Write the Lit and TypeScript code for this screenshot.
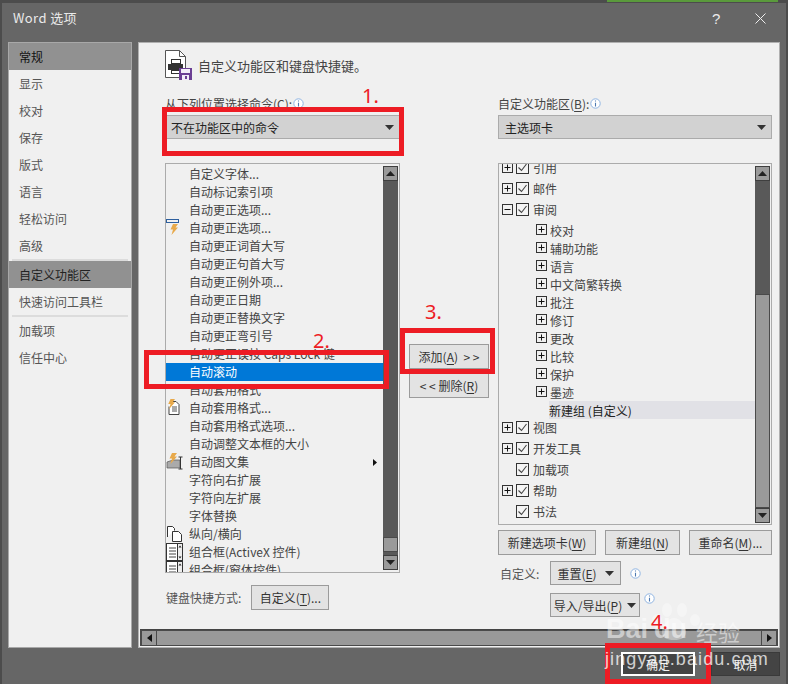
import { LitElement, html, css, svg } from "lit";
import { customElement } from "lit/decorators.js";

const plus = (minus = false) => html`<svg class="pm" width="11" height="11" viewBox="0 0 11 11"><rect x=".5" y=".5" width="10" height="10" fill="#f0f0f0" stroke="#333"/><path d="M2.5 5.5h6${minus ? "" : "M5.5 2.5v6"}" stroke="#111" fill="none"/></svg>`;
const check = () => html`<svg class="ck" width="13" height="13" viewBox="0 0 13 13"><rect x=".5" y=".5" width="12" height="12" fill="#f4f4f4" stroke="#333"/><path d="M2.5 6.5l3 3 5-6.5" stroke="#444" stroke-width="1.1" fill="none"/></svg>`;
const info = () => html`<svg class="info" width="11" height="11" viewBox="0 0 11 11"><circle cx="5.5" cy="5.5" r="4.7" fill="#fff" stroke="#8fb4e2"/><path d="M5.5 2.4v1.2M5.5 4.8v3.6" stroke="#4d79b0" stroke-width="1.1"/></svg>`;
const caret = () => html`<svg class="caret" width="9" height="5" viewBox="0 0 9 5"><path d="M0 0h9L4.5 5z" fill="#333"/></svg>`;

const bolt = svg`<path d="M5 0h5L7.5 3.5H10L3.5 11 5 5.5H2.5z" fill="#e8a94a"/>`;
const icons: Record<string, unknown> = {
  bolt: html`<svg width="14" height="18" viewBox="0 0 14 18"><rect x=".5" y=".5" width="12" height="3" fill="none" stroke="#2d5f9e"/><g transform="translate(2 5)">${bolt}</g></svg>`,
  doc: html`<svg width="14" height="18" viewBox="0 0 14 18"><path d="M5 2.5h5l3 3v10H3v-8" fill="#fff" stroke="#444"/><path d="M6 8h5M6 10h5M6 12h5" stroke="#555"/><g transform="scale(.9)">${bolt}</g></svg>`,
  auto: html`<svg width="18" height="18" viewBox="0 0 18 18"><path d="M1 15V9l6-2h7v8z" fill="#aaa" stroke="#555" stroke-width=".7"/><path d="M12.5 4h4M12.5 16h4M14.5 4v12" stroke="#333" fill="none"/><g transform="translate(1 0)">${bolt}</g></svg>`,
  page: html`<svg width="18" height="18" viewBox="0 0 18 18"><path d="M1.5 12V1.5h5l2 2v2" fill="#fff" stroke="#333"/><path d="M6.500 6.500h6l3 3v7h-9z" fill="#fff" stroke="#333"/></svg>`,
  combo: html`<svg width="18" height="18" viewBox="0 0 18 18"><rect x=".5" y=".5" width="16" height="17" fill="#fff" stroke="#333"/><rect x="11.500" y=".5" width="5" height="17" fill="#eee" stroke="#333"/><path d="M3 5h7M3 8h7M3 11h7M3 14h7" stroke="#444"/><path d="M12.500 4.500h3l-1.500-2zM12.500 13.500h3l-1.500 2z" fill="#222"/></svg>`,
};

const commands: [string, string?][] = [
  ["自定义字体..."],
  ["自动标记索引项"],
  ["自动更正选项..."],
  ["自动更正选项...", "bolt"],
  ["自动更正词首大写"],
  ["自动更正句首大写"],
  ["自动更正例外项..."],
  ["自动更正日期"],
  ["自动更正替换文字"],
  ["自动更正弯引号"],
  ["自动更正误按 Caps Lock 键"],
  ["自动滚动"],
  ["自动套用格式"],
  ["自动套用格式...", "doc"],
  ["自动套用格式选项..."],
  ["自动调整文本框的大小"],
  ["自动图文集", "auto"],
  ["字符向右扩展"],
  ["字符向左扩展"],
  ["字体替换"],
  ["纵向/横向", "page"],
  ["组合框(ActiveX 控件)", "combo"],
  ["组合框(窗体控件)", "combo"],
];

@customElement("app-root")
export class AppRoot extends LitElement {
  static styles = css`
    :host { display: block; width: 788px; height: 684px; overflow: hidden; position: relative;
      font-family: "Noto Sans CJK SC", "Noto Sans", sans-serif; font-size: 12px; color: #444; background: #4c4c4c; }
    * { box-sizing: border-box; }
    svg { display: block; flex: none; }
    u { text-underline-offset: 2px; }
    .topstrip { height: 3px; position: relative; background: #4c4c4c; }
    .green { position: absolute; left: 607px; right: 10px; top: 0; height: 2px; background: #5a9a3c; }
    .dialog { margin: 0 2px; height: 681px; background: #666; display: flex; flex-direction: column; }
    .title { height: 39px; display: flex; align-items: center; padding: 0 14px 0 11px; color: #eaeaea; font-size: 13px; letter-spacing: .4px; }
    .title .t { flex: 1; margin-top: -10px; }
    .title .q { width: 43px; font-size: 15px; margin-top: -9px; font-family: "Liberation Sans", sans-serif; text-align: left; }
    .title svg { margin-top: -9px; margin-right: 6px; }
    .main { display: flex; gap: 6px; padding: 0 6px; height: 606px; }
    .side { width: 124px; background: #f0f0f0; border: 1px solid #a8a8a8; display: flex; flex-direction: column; }
    .nav { height: 27px; padding-left: 10px; display: flex; align-items: center; color: #555; flex: none; }
    .nav.sel0 { background: #919191; color: #111; }
    .nav.sel1 { background: #919191; color: #222; margin-top: 0; }
    .nav.line { height: 27px; }
    .rule { height: 2px; background: #dcdcdc; margin: 0 3px; flex: none; }
    .rule.a { margin-top: 1px; }
    .content { flex: 1; background: #f0f0f0; border: 1px solid #b0b0b0; display: flex; flex-direction: column; }
    .body { flex: 1; padding: 8px 7px 0 26px; display: flex; flex-direction: column; }
    .head { display: flex; align-items: center; gap: 6px; height: 28px; font-size: 13px; color: #444; }
    .cols { display: flex; margin-top: 15px; }
    .left { width: 235px; }
    .mid { width: 98px; padding: 250px 9px 0; display: flex; flex-direction: column; gap: 4px; }
    .right { width: 274px; }
    .lab { height: 21px; display: flex; align-items: center; gap: 1px; padding-bottom: 3px; }
    .select { height: 24px; background: #d2d2d2; border: 1px solid #ababab; display: flex; align-items: center; justify-content: space-between; padding: 0 5px 0 6px; color: #222; margin-bottom: 24px; }
    .left .select { margin-left: 1px; padding-left: 4px; }
    .list { border: 1px solid #ababab; background: #f0f0f0; display: flex; position: relative; overflow: hidden; }
    .left .list { height: 410px; }
    .right .list { height: 362px; }
    .rows { flex: 1; overflow: hidden; min-width: 0; }
    .cmd { height: 18px; padding: 0 0 2px 23px; display: flex; align-items: center; white-space: nowrap; position: relative; }
    .cmds { padding-top: 1px; }
    .cmd .ic { position: absolute; left: 0; top: 0; }
    .cmd.on { background: #0078d7; color: #fff; }
    .cmd .more { position: absolute; right: 6px; top: 6px; }
    .sb { width: 15px; margin: 2px 1px 2px 0; background: #595959; display: flex; flex-direction: column; }
    .sb .btn { height: 15px; background: #9a9a9a; border: 1px solid #3f3f3f; display: flex; align-items: center; justify-content: center; flex: none; }
    .sb .thumb { background: #9a9a9a; border: 1px solid #4a4a4a; }
    .sb .gap { flex: 1; }
    .tree { margin-top: -7px; }
    .top { height: 21px; display: flex; align-items: center; padding-left: 3px; white-space: nowrap; }
    .top .pm { margin-right: 3px; }
    .top .ck { margin-right: 4px; }
    .top .sp { width: 14px; flex: none; }
    .top.before { margin-bottom: 1px; }
    .sub { height: 18px; display: flex; align-items: center; padding-left: 37px; }
    .sub .pm { margin: -2px 3px 0 0; }
    .leaf { height: 18px; margin-left: 50px; background: #e1e1e6; color: #222; display: flex; align-items: center; }
    .tree .after { margin-top: -2px; }
    .btn2 { height: 25px; background: #e3e3e3; border: 1px solid #9b9b9b; display: flex; align-items: center; justify-content: center; gap: 8px; color: #333; white-space: pre; flex: none; }
    .kb { display: flex; align-items: center; gap: 10px; margin-top: 12px; padding-left: 1px; color: #555; }
    .kb .btn2 { width: 78px; }
    .trio { display: flex; gap: 9px; margin-top: 5px; }
    .line2 { display: flex; gap: 9px; align-items: center; margin-top: 6px; }
    .cust { width: 43px; padding-left: 2px; color: #555; }
    .rowx { margin-left: 52px; display: flex; gap: 4px; margin-top: 8px; }
    .hbar { height: 17px; background: #4a4a4a; margin: 0 1px 1px; padding: 1px 2px; display: flex; gap: 1px; border-top: 1px solid #444; }
    .hbar .end { width: 14px; background: #9a9a9a; display: flex; align-items: center; justify-content: center; flex: none; }
    .hbar .mid2 { flex: 1; background: #999; }
    .foot { display: flex; justify-content: flex-end; gap: 16px; padding: 4px 6px 0; }
    .ok, .cancel { height: 24px; display: flex; align-items: center; justify-content: center; color: #f2f2f2; background: #444; }
    .ok { width: 74px; border: 2px solid #fff; }
    .cancel { width: 69px; border: 1px solid #3a3a3a; }
    .red { position: absolute; border: 5px solid #ed1c24; }
    .num { position: absolute; color: #ed1c24; font-size: 20px; line-height: 24px; font-family: "Noto Sans", sans-serif; }
    .wm { position: absolute; left: 604px; top: 600px; width: 170px; height: 72px; pointer-events: none; color: #fff; }
    .wm .a { position: absolute; top: 15px; font: 700 27px/28px "Liberation Sans", sans-serif; opacity: .5; }
    .wm .b { position: absolute; left: 92px; top: 18px; font-size: 22px; line-height: 26px; opacity: .5; }
    .wm .c { position: absolute; left: 1px; top: 49px; font: 400 18px/20px "Liberation Sans", sans-serif; letter-spacing: 1.1px; opacity: .75; white-space: nowrap; }
    .wm svg { position: absolute; left: 46px; top: 0; }
  `;

  private nav(t: string, cls = "") {
    return html`<div class="nav ${cls}">${t}</div>`;
  }

  private sb(thumbTop: number, thumbH: number) {
    return html`<div class="sb">
      <div class="btn"><svg width="9" height="5" viewBox="0 0 9 5"><path d="M4.500 0L9 5H0z" fill="#222"/></svg></div>
      <div style="height:${thumbTop}px;flex:none"></div>
      <div class="thumb" style="height:${thumbH}px;flex:none"></div>
      <div class="gap"></div>
      <div class="btn"><svg width="9" height="5" viewBox="0 0 9 5"><path d="M0 0h9L4.500 5z" fill="#222"/></svg></div>
    </div>`;
  }

  render() {
    return html`
      <div class="topstrip"><div class="green"></div></div>
      <div class="dialog">
        <div class="title">
          <span class="t">Word 选项</span>
          <span class="q">?</span>
          <svg width="11" height="11" viewBox="0 0 11 11"><path d="M.5.5l10 10M10.500.5l-10 10" stroke="#eee" fill="none"/></svg>
        </div>
        <div class="main">
          <div class="side">
            ${this.nav("常规", "sel0")}
            ${this.nav("显示")}${this.nav("校对")}${this.nav("保存")}${this.nav("版式")}${this.nav("语言")}${this.nav("轻松访问")}${this.nav("高级")}
            <div class="rule"></div>
            ${this.nav("自定义功能区", "sel1")}
            ${this.nav("快速访问工具栏", "line")}
            <div class="rule"></div>
            ${this.nav("加载项", "line")}
            ${this.nav("信任中心")}
          </div>
          <div class="content">
            <div class="body">
              <div class="head">
                <svg width="27" height="30" viewBox="0 0 27 30">
                  <path d="M.5.5h14l6 6v21H.5z" fill="#fff" stroke="#555"/>
                  <path d="M14.500.5v6h6" fill="none" stroke="#555"/>
                  <rect x="6.500" y="9.500" width="9" height="4" fill="#fff" stroke="#333"/>
                  <rect x="3" y="14" width="15" height="6" fill="#333"/>
                  <rect x="6.500" y="20.500" width="9" height="3" fill="#fff" stroke="#333"/>
                  <rect x="14" y="18" width="13" height="12" fill="#6b3f94"/>
                  <rect x="16" y="19" width="9" height="4" fill="#f3eef8"/>
                  <rect x="17" y="25" width="7" height="5" fill="#f3eef8"/>
                  <rect x="20" y="26" width="2" height="3" fill="#6b3f94"/>
                </svg>
                <span>自定义功能区和键盘快捷键。</span>
              </div>
              <div class="cols">
                <div class="left">
                  <div class="lab"><span>从下列位置选择命令(C):</span>${info()}</div>
                  <div class="select"><span>不在功能区中的命令</span>${caret()}</div>
                  <div class="list">
                    <div class="rows cmds">
                      ${commands.map(
                        ([t, ic], i) => html`<div class="cmd ${i === 11 ? "on" : ""}">
                          ${ic ? html`<span class="ic">${icons[ic]}</span>` : ""}
                          <span>${t}</span>
                          ${i === 16 ? html`<svg class="more" width="4" height="7" viewBox="0 0 4 7"><path d="M0 0l4 3.500L0 7z" fill="#111"/></svg>` : ""}
                        </div>`
                      )}
                    </div>
                    ${this.sb(356, 15)}
                  </div>
                  <div class="kb"><span>键盘快捷方式:</span><div class="btn2"><span>自定义(<u>T</u>)...</span></div></div>
                </div>
                <div class="mid">
                  <div class="btn2"><span>添加(<u>A</u>)  &gt; &gt;</span></div>
                  <div class="btn2"><span>&lt; &lt; 删除(<u>R</u>)</span></div>
                </div>
                <div class="right">
                  <div class="lab"><span>自定义功能区(<u>B</u>):</span>${info()}</div>
                  <div class="select"><span>主选项卡</span>${caret()}</div>
                  <div class="list">
                    <div class="rows tree">
                      <div class="top">${plus()}${check()}<span>引用</span></div>
                      <div class="top">${plus()}${check()}<span>邮件</span></div>
                      <div class="top before">${plus(true)}${check()}<span>审阅</span></div>
                      ${["校对", "辅助功能", "语言", "中文简繁转换", "批注", "修订", "更改", "比较", "保护", "墨迹"].map(
                        (t) => html`<div class="sub">${plus()}<span>${t}</span></div>`
                      )}
                      <div class="leaf">新建组 (自定义)</div>
                      <div class="top after">${plus()}${check()}<span>视图</span></div>
                      <div class="top">${plus()}${check()}<span>开发工具</span></div>
                      <div class="top"><span class="sp"></span>${check()}<span>加载项</span></div>
                      <div class="top">${plus()}${check()}<span>帮助</span></div>
                      <div class="top"><span class="sp"></span>${check()}<span>书法</span></div>
                    </div>
                    ${this.sb(113, 214)}
                  </div>
                  <div class="trio">
                    <div class="btn2" style="width:98px"><span>新建选项卡(<u>W</u>)</span></div>
                    <div class="btn2" style="width:75px"><span>新建组(<u>N</u>)</span></div>
                    <div class="btn2" style="width:83px"><span>重命名(<u>M</u>)...</span></div>
                  </div>
                  <div class="line2">
                    <span class="cust">自定义:</span>
                    <div class="btn2" style="width:71px;height:24px"><span>重置(<u>E</u>)</span>${caret()}</div>
                    ${info()}
                  </div>
                  <div class="rowx">
                    <div class="btn2" style="width:90px;height:24px;gap:5px"><span>导入/导出(<u>P</u>)</span>${caret()}</div>
                    ${info()}
                  </div>
                </div>
              </div>
            </div>
            <div class="hbar">
              <div class="end"><svg width="5" height="8" viewBox="0 0 5 8"><path d="M5 0v8L0 4z" fill="#111"/></svg></div>
              <div class="mid2"></div>
              <div class="end"><svg width="5" height="8" viewBox="0 0 5 8"><path d="M0 0v8l5-4z" fill="#111"/></svg></div>
            </div>
          </div>
        </div>
        <div class="foot"><div class="ok">确定</div><div class="cancel">取消</div></div>
      </div>

      <div class="red" style="left:162px;top:107px;width:242px;height:49px"></div>
      <div class="red" style="left:144px;top:350px;width:245px;height:39px"></div>
      <div class="red" style="left:400px;top:328px;width:95px;height:46px"></div>
      <div class="red" style="left:605px;top:643px;width:106px;height:41px"></div>
      <div class="num" style="left:362px;top:84px">1.</div>
      <div class="num" style="left:313px;top:329px">2.</div>
      <div class="num" style="left:425px;top:300px">3.</div>

      <div class="wm">
        <svg width="54" height="46" viewBox="0 0 54 46" fill="#fff" opacity=".35">
          <ellipse cx="7" cy="20" rx="5" ry="6"/><ellipse cx="17" cy="10" rx="5" ry="7"/>
          <ellipse cx="32" cy="10" rx="5" ry="7"/><ellipse cx="45" cy="20" rx="5" ry="6"/>
          <path d="M24 18c6 0 12 8 12 14s-5 8-12 8-12-2-12-8 6-14 12-14z"/>
        </svg>
        <span class="a" style="left:2px">Bai</span><span class="a" style="left:50px">du</span>
        <span class="b">经验</span>
        <span class="c">jingyan.baidu.com</span>
      </div>
      <div class="num" style="left:651px;top:610px">4.</div>
    `;
  }
}
